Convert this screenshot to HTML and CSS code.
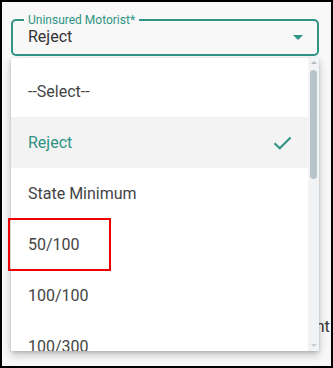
FILE: index.html
```html
<!DOCTYPE html>
<html lang="en">
<head>
  <meta charset="UTF-8" />
  <meta name="viewport" content="width=device-width, initial-scale=1.0" />
  <title>Uninsured Motorist</title>
  <link rel="stylesheet" href="styles.css">
</head>
<body>
  <div class="frame">
    <fieldset class="select-box">
      <legend>Uninsured Motorist*</legend>
      <div class="select-value">
        <span class="value-text">Reject</span>
        <span class="caret"></span>
      </div>
    </fieldset>

    <div class="under">Payment</div>

    <div class="menu">
      <ul class="options">
        <li>--Select--</li>
        <li class="selected">
          Reject
          <svg class="check" width="19" height="14" viewBox="0 0 19 14">
            <path d="M1.5 7.2 L6.8 12.3 L17.6 1.5" fill="none" stroke="#2f9484" stroke-width="2"/>
          </svg>
        </li>
        <li>State Minimum</li>
        <li>50/100</li>
        <li>100/100</li>
        <li>100/300</li>
      </ul>
      <div class="scrollbar">
        <span class="arrow up"></span>
        <span class="thumb"></span>
        <span class="arrow down"></span>
      </div>
    </div>

    <div class="highlight"></div>
  </div>
</body>
</html>
```

FILE: styles.css
```css
* {
  box-sizing: border-box;
}

body {
  margin: 0;
  padding: 0;
  font-family: Roboto, "Liberation Sans", sans-serif;
}

.frame {
  position: relative;
  width: 333px;
  height: 368px;
  border: 2px solid #000;
  background: #f8f8f8;
  overflow: hidden;
}

/* outlined select */
.select-box {
  margin: 11px 12px 0 9px;
  padding: 0 14px 7px 11px;
  border: 2px solid #2f9484;
  border-radius: 5px;
  min-width: 0;
}

.select-box legend {
  padding: 0 4px;
  font-size: 12px;
  line-height: 14px;
  color: #2f9484;
}

.select-value {
  display: flex;
  align-items: center;
  justify-content: space-between;
  margin-left: 4px;
  font-size: 16px;
  line-height: 20px;
  color: #333;
}

.caret {
  width: 0;
  height: 0;
  border-left: 5px solid transparent;
  border-right: 5px solid transparent;
  border-top: 5px solid #2f9484;
  margin-top: 1px;
}

.under {
  margin-top: 261px;
  padding-left: 265px;
  white-space: nowrap;
  font-size: 16px;
  line-height: 20px;
  color: #333;
}

/* dropdown list */
.menu {
  position: absolute;
  left: 9px;
  top: 56px;
  width: 308px;
  height: 293px;
  display: flex;
  background: #fff;
  box-shadow: 0 4px 8px rgba(0, 0, 0, 0.22), 0 1px 3px rgba(0, 0, 0, 0.14);
}

.options {
  flex: 1;
  list-style: none;
  margin: 0;
  padding: 8px 0 0;
  overflow: hidden;
}

.options li {
  display: flex;
  align-items: center;
  justify-content: space-between;
  height: 51px;
  padding: 0 16px 0 17px;
  font-size: 16px;
  color: #444;
}

.options li.selected {
  background: #f3f3f3;
  color: #2f9484;
}

.check {
  margin-top: 1px;
}

.scrollbar {
  width: 11px;
  display: flex;
  flex-direction: column;
  align-items: center;
  background: #f1f3f5;
  padding: 3px 0 4px;
}

.arrow {
  width: 0;
  height: 0;
  border-left: 3px solid transparent;
  border-right: 3px solid transparent;
}

.arrow.up {
  border-bottom: 3px solid #b4bcc2;
}

.arrow.down {
  border-top: 3px solid #c8cfd4;
}

.thumb {
  width: 7px;
  height: 109px;
  margin: 6px 0 auto;
  border-radius: 4px;
  background: #b8c4cc;
}

/* annotation box */
.highlight {
  position: absolute;
  left: 6px;
  top: 216px;
  width: 103px;
  height: 53px;
  border: 2px solid #ee0000;
}
```
